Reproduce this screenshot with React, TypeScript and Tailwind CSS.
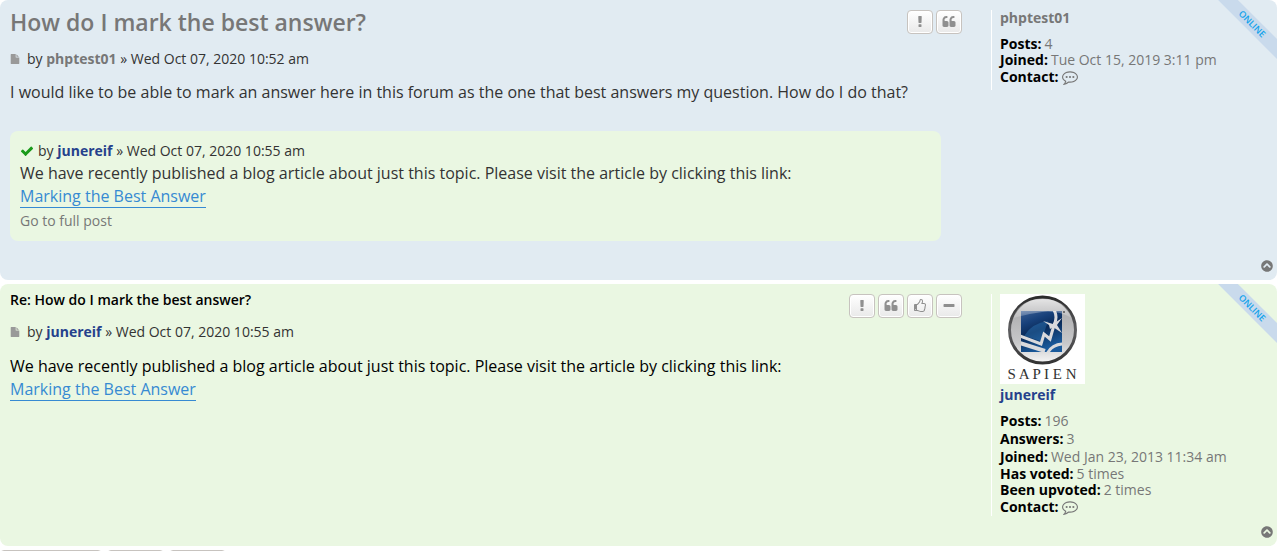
import type { ReactNode } from "react";
import { FaChevronCircleUp } from "react-icons/fa";

const ICONS = {
  exclamation:
    "M1088 1248v224q0 26-19 45t-45 19h-256q-26 0-45-19t-19-45v-224q0-26 19-45t45-19h256q26 0 45 19t19 45zm30-1056l-28 768q-1 26-20.5 45t-45.5 19h-256q-26 0-45.5-19t-20.5-45l-28-768q-1-26 17.5-45t44.5-19h320q26 0 44.5 19t17.5 45z",
  quote:
    "M832 960v384q0 80-56 136t-136 56h-384q-80 0-136-56t-56-136v-704q0-104 40.5-198.5t109.5-163.5 163.5-109.5 198.5-40.5h64q26 0 45 19t19 45v128q0 26-19 45t-45 19h-64q-106 0-181 75t-75 181v32q0 40 28 68t68 28h224q80 0 136 56t56 136zm896 0v384q0 80-56 136t-136 56h-384q-80 0-136-56t-56-136v-704q0-104 40.5-198.5t109.5-163.5 163.5-109.5 198.5-40.5h64q26 0 45 19t19 45v128q0 26-19 45t-45 19h-64q-106 0-181 75t-75 181v32q0 40 28 68t68 28h224q80 0 136 56t56 136z",
  thumb:
    "M384 1344q0-26-19-45t-45-19-45 19-19 45 19 45 45 19 45-19 19-45zm1152-576q0-51-39-89.5t-89-38.5h-352q0-58 48-159.5t48-160.5q0-98-32-145t-128-47q-26 26-38 85t-30.5 125.5-59.5 109.5q-22 23-77 91-4 5-23 30t-31.5 41-34.5 42.5-40 44-38.5 35.5-40 27-35.5 9h-32v640h32q13 0 31.5 3t33 6.5 38 11 35 11.5 35.5 12.5 29 10.5q211 73 342 73h121q192 0 192-167 0-26-5-56 30-16 47.5-52.5t17.5-73.5-18-69q53-50 53-119 0-25-10-55.5t-25-47.5q32-1 53.5-47t21.5-81zm128-1q0 89-49 163 9 33 9 69 0 77-38 144 3 21 3 43 0 101-60 178 1 139-85 219.5t-227 80.5h-129q-96 0-189.5-22.5t-216.5-65.5q-116-40-138-40h-288q-53 0-90.5-37.5t-37.5-90.5v-640q0-53 37.5-90.5t90.5-37.5h274q36-24 137-155 58-75 107-128 24-25 35.5-85.5t30.5-126.5 62-108q39-37 90-37 84 0 151 32.5t102 101.5 35 186q0 93-48 192h176q104 0 180 76t76 179z",
  minus:
    "M1600 736v192q0 40-28 68t-68 28h-1216q-40 0-68-28t-28-68v-192q0-40 28-68t68-28h1216q40 0 68 28t28 68z",
  check:
    "M1671 566q0 40-28 68l-724 724-136 136q-28 28-68 28t-68-28l-136-136-362-362q-28-28-28-68t28-68l136-136q28-28 68-28t68 28l294 295 656-657q28-28 68-28t68 28l136 136q28 28 28 68z",
  file:
    "M1152 512v-472q22 14 36 28l408 408q14 14 28 36h-472zm-128 32q0 40 28 68t68 28h544v1056q0 40-28 68t-68 28h-1344q-40 0-68-28t-28-68v-1600q0-40 28-68t68-28h800v544z",
  comment:
    "M640 896a120 120 0 1 1-240 0 120 120 0 0 1 240 0zm376 0a120 120 0 1 1-240 0 120 120 0 0 1 240 0zm376 0a120 120 0 1 1-240 0 120 120 0 0 1 240 0zM896 384q-204 0-381.500 69.500t-282 187.500-104.500 255q0 112 71.500 213.500t201.500 175.500l87 50-27 96q-24 91-70 172 152-63 275-171l43-38 57 6q69 8 130 8 204 0 381.500-69.500t282-187.500 104.500-255-104.500-255-282-187.500-381.500-69.500zm896 512q0 174-120 321.500t-326 233-450 85.500q-70 0-145-8-198 175-460 242-49 14-114 22h-5q-15 0-27-10.500t-16-27.500v-1q-3-4-.5-12t2-10 4.500-9.500l6-9 7-8.500 8-9q7-8 31-34.500t34.500-38 31-39.500 32.500-51 27-59 26-76q-157-89-247.500-220t-90.500-281q0-174 120-321.500t326-233 450-85.500 450 85.500 326 233 120 321.500z",
};

type IconName = keyof typeof ICONS;

const Icon = ({ name, className }: { name: IconName; className: string }) => (
  <svg viewBox="0 0 1792 1792" fill="currentColor" className={className} aria-hidden="true">
    <path d={ICONS[name]} />
  </svg>
);

const PostButton = ({ name, label }: { name: IconName; label: string }) => (
  <button
    type="button"
    aria-label={label}
    className="flex h-6 w-[26px] items-center justify-center rounded border border-[#c7c3bf] bg-linear-to-b from-white to-[#e9e9e9] text-[#8f8f8f] shadow-[0_0_0_1px_#ffffff_inset]"
  >
    <Icon name={name} className="size-[14px]" />
  </button>
);

const OnlineRibbon = () => (
  <div className="pointer-events-none absolute top-0 right-0 size-[60px] overflow-hidden">
    <div className="absolute top-[17px] -right-[25px] w-[100px] rotate-45 bg-[#c9daec] text-center text-[9px] leading-[14px] font-semibold text-[#12a3eb]">
      ONLINE
    </div>
  </div>
);

const Byline = ({ author, className, date }: { author: string; className: string; date: string }) => (
  <span>
    by{" "}
    <a href="#" className={`font-bold ${className}`}>
      {author}
    </a>{" "}
    » {date}
  </span>
);

const ArticleText = () => (
  <>
    <p>We have recently published a blog article about just this topic. Please visit the article by clicking this link:</p>
    <p>
      <a href="#" className="border-b border-[#368ad2] text-[#368ad2]">
        Marking the Best Answer
      </a>
    </p>
  </>
);

const Stat = ({ label, tall, children }: { label: string; tall?: boolean; children: ReactNode }) => (
  <div className={`flex items-center gap-[3px] ${tall ? "h-[18px]" : "h-4"}`}>
    <dt className="font-bold text-black">{label}:</dt>
    <dd>{children}</dd>
  </div>
);

const Contact = () => (
  <a href="#" aria-label="Contact" className="block">
    <Icon name="comment" className="size-4" />
  </a>
);

const TopLink = () => (
  <a href="#" aria-label="Top" className="absolute right-1 bottom-2 text-[#777777]">
    <FaChevronCircleUp className="size-3" />
  </a>
);

const SapienLogo = () => (
  <svg viewBox="0 0 85 90" className="block h-[90px] w-[85px]" role="img" aria-label="SAPIEN">
    <defs>
      <linearGradient id="ring" x1="0" y1="0" x2="0" y2="1">
        <stop offset="0" stopColor="#2b2b2b" />
        <stop offset="0.5" stopColor="#5f5f62" />
        <stop offset="1" stopColor="#333333" />
      </linearGradient>
      <linearGradient id="disc" x1="0" y1="0" x2="0" y2="1">
        <stop offset="0" stopColor="#a5a5a7" />
        <stop offset="0.35" stopColor="#b5b5b7" />
        <stop offset="0.7" stopColor="#c8c8ca" />
        <stop offset="1" stopColor="#f6f6f6" />
      </linearGradient>
      <linearGradient id="gloss" x1="0" y1="0" x2="0" y2="1">
        <stop offset="0" stopColor="#ffffff" stopOpacity="0.7" />
        <stop offset="1" stopColor="#ffffff" stopOpacity="0.15" />
      </linearGradient>
      <linearGradient id="blue" x1="0" y1="0" x2="0.4" y2="1">
        <stop offset="0" stopColor="#3c5f94" />
        <stop offset="0.3" stopColor="#17407a" />
        <stop offset="0.55" stopColor="#0a2a58" />
        <stop offset="1" stopColor="#1a5a9c" />
      </linearGradient>
      <clipPath id="square">
        <rect x="21" y="17" width="41" height="41" />
      </clipPath>
    </defs>
    <rect width="85" height="90" fill="#ffffff" />
    <circle cx="42.500" cy="36" r="33" fill="url(#disc)" stroke="url(#ring)" strokeWidth="3" />
    <rect x="21" y="17" width="41" height="41" fill="url(#blue)" />
    <path d="M24 42q8-13 24-15l-4 12-3 8z" fill="#2f78b8" opacity="0.45" />
    {/* pale figure cut out of the blue square */}
    <g clipPath="url(#square)" fill="none" stroke="#d9d9dc">
      <path d="M54 16q4 7 0 15l-4 14-6-5-3 10-21-8" strokeWidth="3" />
      <path d="M20 49l25 8" strokeWidth="4" />
      <path d="M47 60q5-10 17-10" strokeWidth="3" />
    </g>
    <path d="M43 27l10 3 9-6-5 7 5 8-9-6-3 2-1-4z" fill="#d9d9dc" />
    <path d="M13 24Q20 5 42.500 5T72 24Q57 16 42 18T13 24z" fill="url(#gloss)" />
    <circle cx="64" cy="18" r="1" fill="#555555" />
    <text x="42" y="85" textAnchor="middle" fontFamily="Liberation Serif, serif" fontSize="15" fill="#333333">
      S A P I E N
    </text>
  </svg>
);

export default function App() {
  return (
    <main className="h-screen overflow-hidden bg-white font-['Open_Sans',sans-serif] text-[14px] leading-4 text-[#333333]">
      <article className="relative mb-1 flex min-h-[280px] overflow-hidden rounded-lg bg-[#e1ebf2] pt-2.5 pl-2.5">
        <div className="min-w-0 flex-1">
          <header className="mr-[29px] flex justify-between">
            <h2 className="text-[23px] leading-6 font-semibold text-[#777777]">How do I mark the best answer?</h2>
            <div className="flex gap-[3px]">
              <PostButton name="exclamation" label="Report this post" />
              <PostButton name="quote" label="Reply with quote" />
            </div>
          </header>
          <div className="mt-[17px] flex items-center gap-[7px]">
            <Icon name="file" className="size-2.5 text-[#999999]" />
            <Byline author="phptest01" className="text-[#777777]" date="Wed Oct 07, 2020 10:52 am" />
          </div>
          <p className="mt-3.5 text-[16px] leading-[23px]">
            I would like to be able to mark an answer here in this forum as the one that best answers my question. How do I do that?
          </p>
          <section className="mt-[27px] mr-[50px] rounded-lg bg-[#eaf7e2] px-2.5 pt-3 pb-3">
            <div className="flex items-center gap-1">
              <Icon name="check" className="size-3.5 text-[#1a9a1a]" />
              <Byline author="junereif" className="text-[#25418c]" date="Wed Oct 07, 2020 10:55 am" />
            </div>
            <div className="mt-[3px] text-[16px] leading-[23px]">
              <ArticleText />
            </div>
            <a href="#" className="mt-[5px] inline-block text-[#777777]">
              Go to full post
            </a>
          </section>
        </div>
        <aside className="w-[286px] self-start border-l border-white pb-1 pl-2 text-[#777777]">
          <a href="#" className="block font-bold">
            phptest01
          </a>
          <dl className="mt-2.5">
            <Stat label="Posts">4</Stat>
            <Stat label="Joined">Tue Oct 15, 2019 3:11 pm</Stat>
            <Stat label="Contact" tall>
              <Contact />
            </Stat>
          </dl>
        </aside>
        <OnlineRibbon />
        <TopLink />
      </article>

      <article className="relative mb-1 flex min-h-[262px] overflow-hidden rounded-lg bg-[#eaf7e2] pt-2.5 pl-2.5">
        <div className="min-w-0 flex-1">
          <header className="mr-[29px] flex justify-between">
            <h3 className="text-[14px] leading-3 font-semibold text-black">Re: How do I mark the best answer?</h3>
            <div className="flex gap-[3px]">
              <PostButton name="exclamation" label="Report this post" />
              <PostButton name="quote" label="Reply with quote" />
              <PostButton name="thumb" label="Vote up" />
              <PostButton name="minus" label="Remove vote" />
            </div>
          </header>
          <div className="mt-1.5 flex items-center gap-[7px]">
            <Icon name="file" className="size-2.5 text-[#999999]" />
            <Byline author="junereif" className="text-[#25418c]" date="Wed Oct 07, 2020 10:55 am" />
          </div>
          <div className="mt-[15px] text-[16px] leading-[23px] text-black">
            <ArticleText />
          </div>
        </div>
        <aside className="w-[286px] self-start border-l border-white pl-2 text-[#777777]">
          <SapienLogo />
          <a href="#" className="mt-[3px] block font-bold text-[#25418c]">
            junereif
          </a>
          <dl className="mt-[9px]">
            <Stat label="Posts" tall>196</Stat>
            <Stat label="Answers" tall>3</Stat>
            <Stat label="Joined" tall>Wed Jan 23, 2013 11:34 am</Stat>
            <Stat label="Has voted">5 times</Stat>
            <Stat label="Been upvoted">2 times</Stat>
            <Stat label="Contact" tall>
              <Contact />
            </Stat>
          </dl>
        </aside>
        <OnlineRibbon />
        <TopLink />
      </article>

      <div className="flex gap-[5px]">
        <button type="button" aria-label="Post reply" className="h-7 w-[102px] rounded border border-[#c7c3bf]" />
        <button type="button" aria-label="Topic tools" className="h-7 w-[57px] rounded border border-[#c7c3bf]" />
        <button type="button" aria-label="Sort" className="h-7 w-[57px] rounded border border-[#c7c3bf]" />
      </div>
    </main>
  );
}
